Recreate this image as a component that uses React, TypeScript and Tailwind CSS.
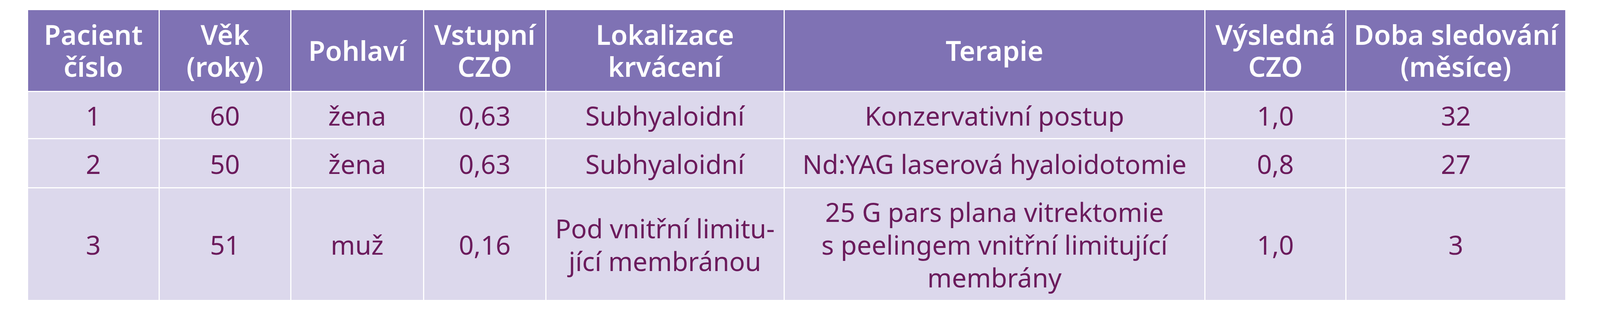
import React from "react";

const headers: React.ReactNode[] = [
  <>Pacient<br />číslo</>,
  <>Věk<br />(roky)</>,
  <>Pohlaví</>,
  <>Vstupní<br />CZO</>,
  <>Lokalizace<br />krvácení</>,
  <>Terapie</>,
  <>Výsledná<br />CZO</>,
  <>Doba sledování<br />(měsíce)</>,
];

const rows: React.ReactNode[][] = [
  ["1", "60", "žena", "0,63", "Subhyaloidní", "Konzervativní postup", "1,0", "32"],
  ["2", "50", "žena", "0,63", "Subhyaloidní", "Nd:YAG laserová hyaloidotomie", "0,8", "27"],
  [
    "3",
    "51",
    "muž",
    "0,16",
    <>Pod vnitřní limitu-<br />jící membránou</>,
    <>25 G pars plana vitrektomie<br />s peelingem vnitřní limitující<br />membrány</>,
    "1,0",
    "3",
  ],
];

export default function App() {
  return (
    <div
      className="h-[800px] w-full bg-white pl-[1.756%] pr-[2.172%] pt-[26px]"
      style={{ fontFamily: '"Noto Sans", "Open Sans", sans-serif' }}
    >
      <div className="grid w-full grid-cols-[minmax(0,353fr)_minmax(0,353fr)_minmax(0,356fr)_minmax(0,328fr)_minmax(0,641fr)_minmax(0,1136fr)_minmax(0,378fr)_minmax(0,592fr)] grid-rows-[207px_118px_123px_286px] gap-[3px]">
        {headers.map((h, i) => (
          <div
            key={`h${i}`}
            className="flex items-center justify-center bg-[#7f72b4] text-center text-[70px] font-semibold leading-[82px] whitespace-nowrap text-white"
          >
            <div className="pb-[2px]">{h}</div>
          </div>
        ))}
        {rows.map((r, ri) =>
          r.map((c, ci) => (
            <div
              key={`r${ri}c${ci}`}
              className="flex items-center justify-center bg-[#dcd8ec] text-center text-[67px] font-normal leading-[84px] whitespace-nowrap text-[#6b1b5c]"
            >
              <div className="pt-[2px]">{c}</div>
            </div>
          ))
        )}
      </div>
    </div>
  );
}
